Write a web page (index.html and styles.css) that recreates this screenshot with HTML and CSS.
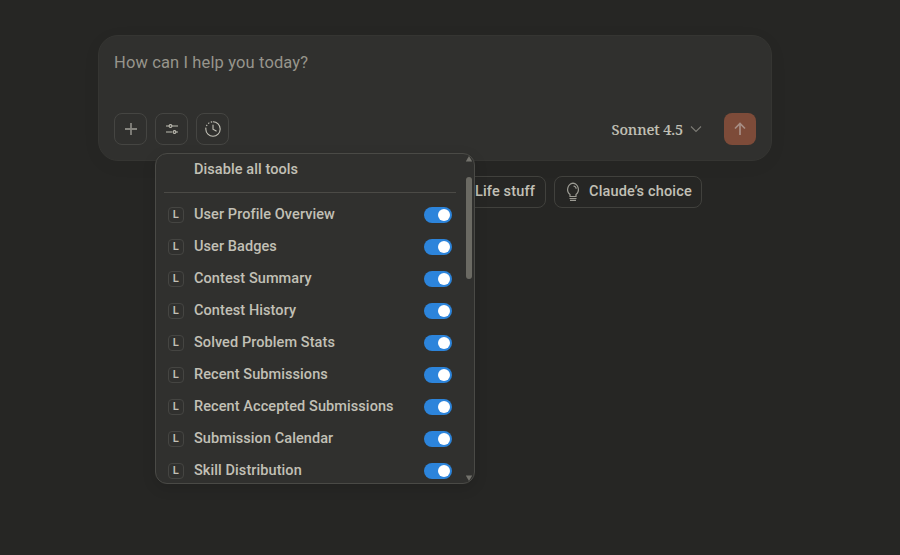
FILE: index.html
```html
<!DOCTYPE html>
<html lang="en">
<head>
<meta charset="utf-8">
<title>Claude</title>
<link rel="stylesheet" href="styles.css">
</head>
<body>
<main class="page">
  <section class="composer">
    <div class="prompt"><span>How can I help you today?</span></div>
    <div class="toolbar">
      <button class="tool" aria-label="Add"><svg width="14" height="14" viewBox="0 0 14 14"><path d="M7 1v12M1 7h12" stroke="#85847e" stroke-width="1.8"/></svg></button>
      <div class="tool-anchor">
        <button class="tool" aria-label="Tools"><svg width="14" height="12" viewBox="0 0 14 12" fill="none" stroke-width="1.3"><path d="M1 3h3M7 3h6M1 9h6M11 9h2" stroke="#8f8e87" stroke-width="1.5"/><g stroke="#c2c0b6" stroke-width="1.1"><circle cx="5.5" cy="3" r="1.4"/><circle cx="9.5" cy="9" r="1.4"/></g></svg></button>
        <div class="menu">
          <div class="list">
            <div class="disable"><span>Disable all tools</span></div>
            <div class="row"><i class="badge">L</i><span class="name">User Profile Overview</span><b class="switch"></b></div>
            <div class="row"><i class="badge">L</i><span class="name">User Badges</span><b class="switch"></b></div>
            <div class="row"><i class="badge">L</i><span class="name">Contest Summary</span><b class="switch"></b></div>
            <div class="row"><i class="badge">L</i><span class="name">Contest History</span><b class="switch"></b></div>
            <div class="row"><i class="badge">L</i><span class="name">Solved Problem Stats</span><b class="switch"></b></div>
            <div class="row"><i class="badge">L</i><span class="name">Recent Submissions</span><b class="switch"></b></div>
            <div class="row"><i class="badge">L</i><span class="name">Recent Accepted Submissions</span><b class="switch"></b></div>
            <div class="row"><i class="badge">L</i><span class="name">Submission Calendar</span><b class="switch"></b></div>
            <div class="row"><i class="badge">L</i><span class="name">Skill Distribution</span><b class="switch"></b></div>
          </div>
          <div class="scrollbar">
            <svg width="8" height="6" viewBox="0 0 8 6"><path d="M4 0 7.2 5.5H.8z" fill="#73726c"/></svg>
            <div class="thumb"></div>
            <svg class="down" width="8" height="6" viewBox="0 0 8 6"><path d="M.8 .5h6.4L4 6z" fill="#73726c"/></svg>
          </div>
        </div>
      </div>
      <button class="tool" aria-label="Extended thinking"><svg width="18" height="18" viewBox="0 0 18 18" fill="none" stroke="#c2c0b6" stroke-width="1.1"><path d="M9 1.8a7.2 7.2 0 1 1-7.2 7.2"/><path d="M1.8 9A7.2 7.2 0 0 1 9 1.8" stroke-dasharray="1.4 1.6"/><path d="M9 5v4.2l3.2 1.7" stroke-linecap="round"/></svg></button>
      <div class="model"><span>Sonnet 4.5</span><svg width="12" height="8" viewBox="0 0 12 8"><path d="m1 1.5 5 5 5-5" fill="none" stroke="#7c7b75" stroke-width="1.1"/></svg></div>
      <button class="send" aria-label="Send"><svg width="14" height="14" viewBox="0 0 14 14"><path d="M7 13V1.6M2 6.5l5-5 5 5" fill="none" stroke="#a78e85" stroke-width="1.7"/></svg></button>
    </div>
  </section>
  <div class="chips">
    <button class="chip life"><span>Life stuff</span></button>
    <button class="chip choice"><svg width="16" height="20" viewBox="0 0 16 20" fill="none" stroke="#9b9a92" stroke-width="1.2"><path d="M5 14.5v-2A6.4 6.4 0 0 1 8 1.2a6.4 6.4 0 0 1 3 11.3v2zM4.5 16.5h7M5 18.4h6M8.5 4a3 3 0 0 1 2.7 2.7"/></svg><span>Claude’s choice</span></button>
  </div>
</main>
</body>
</html>
```
FILE: styles.css
```css
* { box-sizing: border-box; }
body { margin: 0; height: 555px; overflow: hidden; background: #262624; color: #c2c0b6; font: 500 14.5px/20px Roboto, sans-serif; letter-spacing: .08px; }
button { font: inherit; letter-spacing: inherit; color: inherit; padding: 0; margin: 0; background: none; }
svg { display: block; flex: none; }
.page { width: 674px; margin-left: 98px; padding-top: 35px; }
.composer { height: 126px; padding: 17px 16px 15px; display: flex; flex-direction: column; justify-content: space-between; background: #30302e; border: 1px solid #353532; border-radius: 20px; box-shadow: 0 4px 20px rgba(0,0,0,.04); }
.prompt { margin-left: -1px; font-size: 16.5px; font-weight: 400; color: #97958c; letter-spacing: .13px; }
.toolbar { display: flex; align-items: center; gap: 8px; margin: 0 -1px; }
.tool { width: 33px; height: 32px; display: flex; align-items: center; justify-content: center; border: 1px solid #454542; border-radius: 8px; }
.tool-anchor { position: relative; }
.model { margin-left: auto; margin-right: 14px; display: flex; align-items: center; gap: 7px; font: 500 14.5px/20px "Noto Serif", "Liberation Serif", serif; letter-spacing: -.1px; -webkit-text-stroke: .15px; }
.send { width: 32px; height: 32px; display: flex; align-items: center; justify-content: center; border: 0; border-radius: 8px; background: #7d4b39; }
.menu { position: absolute; z-index: 2; top: 40px; left: 0; width: 320px; height: 331px; display: flex; overflow: hidden; background: #30302e; border: 1px solid #4a4a46; border-radius: 12px; box-shadow: 0 4px 14px rgba(0,0,0,.12); }
.list { width: 308px; padding: 0 8px; }
.disable { height: 39px; padding: 6px 30px 0; border-bottom: 1px solid #4b4a46; margin-bottom: 5px; }
.row { height: 32px; padding: 0 4px; display: flex; align-items: center; }
.badge { width: 16px; height: 16px; margin: 1px 10px 0 0; display: grid; place-items: center; border: 1px solid #454542; border-radius: 4px; font: 600 11px/13px Inter, sans-serif; padding-bottom: 1px; }
.name { flex: 1; margin-top: -1px; white-space: nowrap; }
.row .name { margin-top: 1px; }
.switch { width: 28px; height: 16px; margin-top: 1px; padding: 2px 2px 2px 14px; border-radius: 8px; background: #2c84db; }
.switch::before { content: ""; display: block; width: 12px; height: 12px; border-radius: 50%; background: #fff; }
.scrollbar { width: 8px; margin-left: 1px; padding: 2px 0; display: flex; flex-direction: column; align-items: center; }
.thumb { width: 6px; height: 102px; margin-top: 15px; border-radius: 3px; background: #6b6a63; }
.down { margin-top: auto; }
.chips { display: flex; gap: 8px; margin: 15px 70px 0 0; justify-content: flex-end; }
.chip { height: 32px; display: flex; align-items: center; border: 1px solid #41413d; border-radius: 8px; padding: 0 10px; white-space: nowrap; letter-spacing: .16px; }
.chip span { margin-top: -1px; }
.life { width: 110px; justify-content: flex-end; }
.choice { width: 148px; gap: 8px; }
```
